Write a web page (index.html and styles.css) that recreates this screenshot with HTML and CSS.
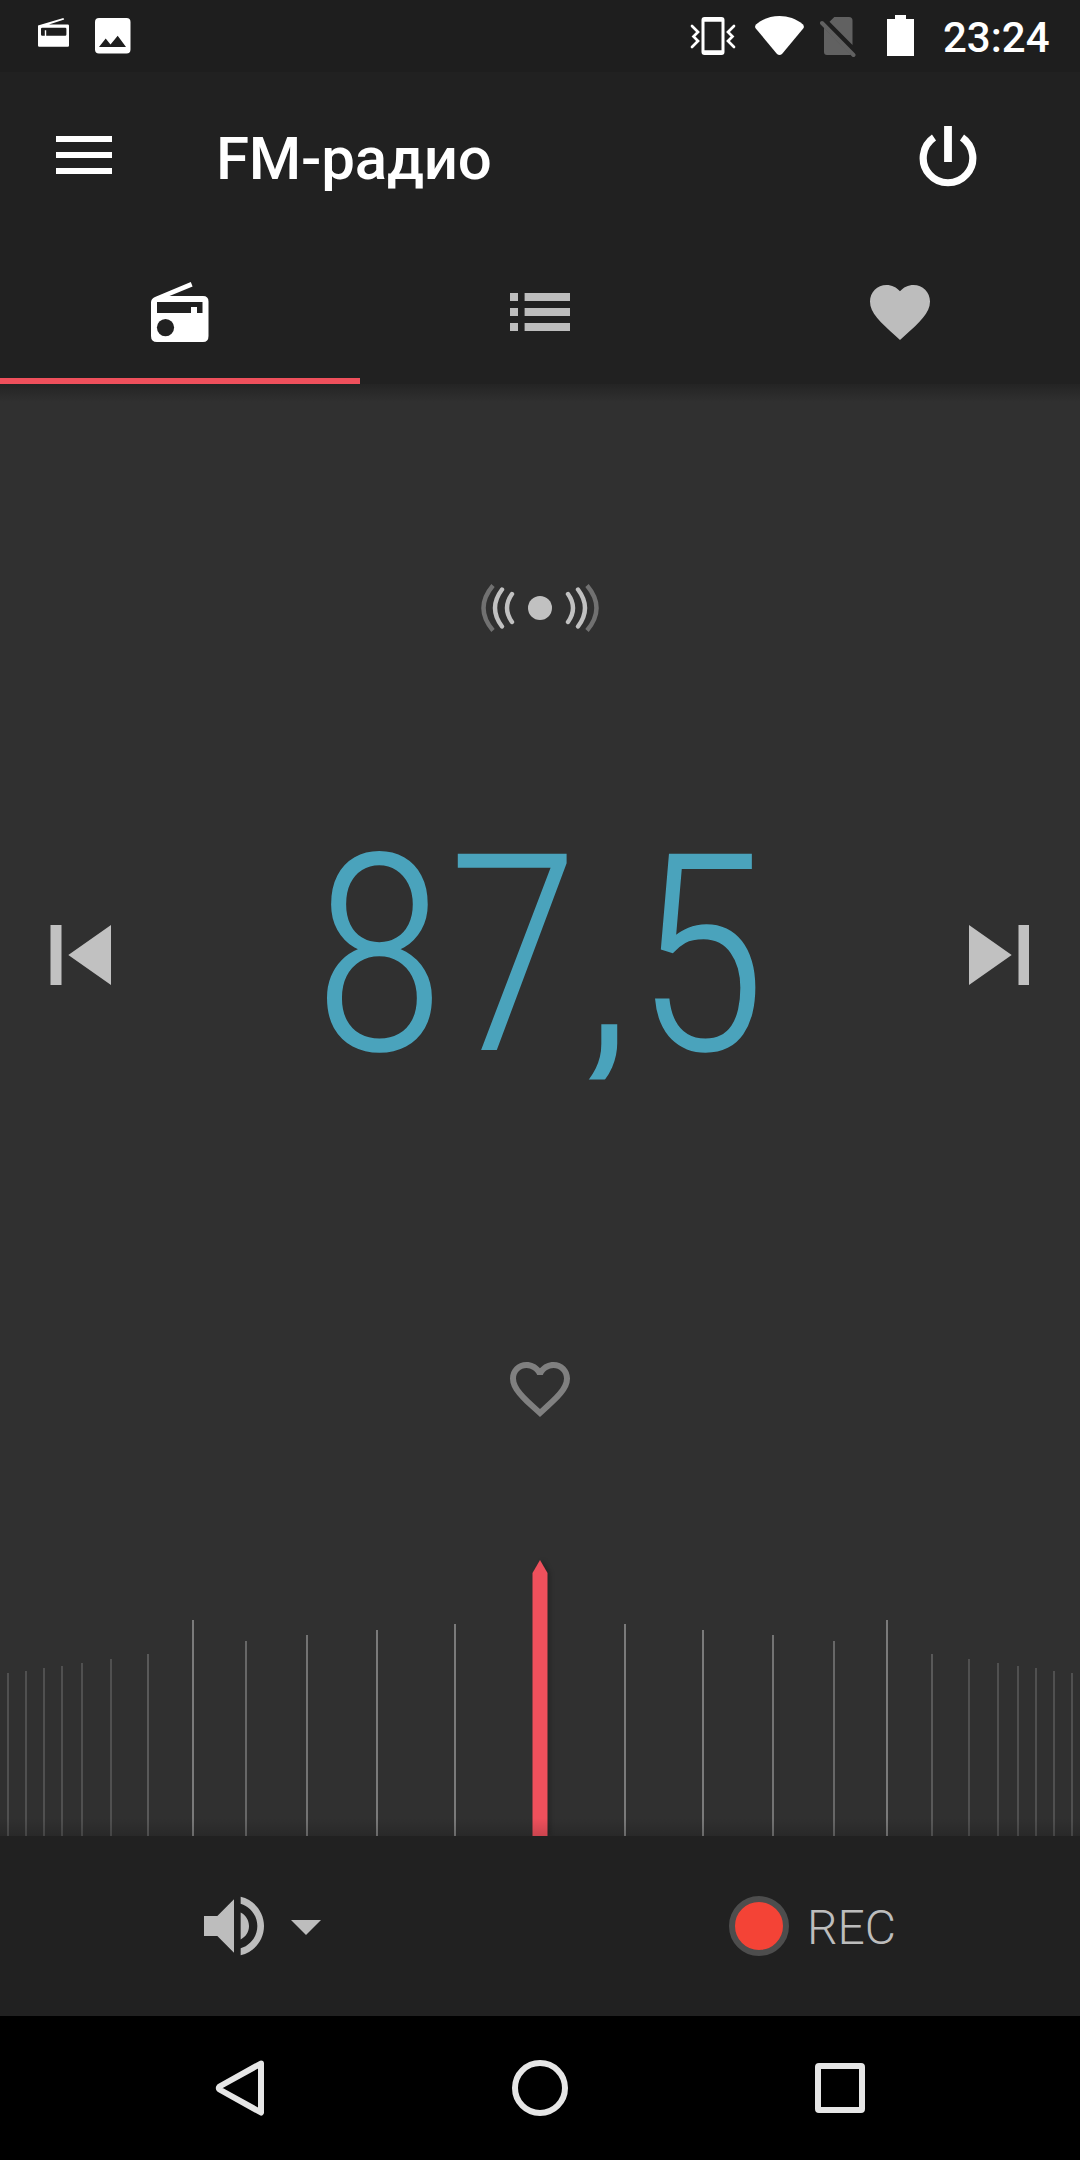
FILE: index.html
```html
<!DOCTYPE html>
<html lang="ru">
<head>
    <meta charset="UTF-8">
    <meta name="viewport" content="width=device-width, initial-scale=1.0">
    <title>FM-радио</title>
    <link rel="stylesheet" href="styles.css">
</head>
<body>
    <div class="status-bar">
        <div class="status-left">
            <svg class="status-radio" width="32" height="30" viewBox="0 0 32 30">
                <path fill-rule="evenodd" d="M0 7.500L25.400 0l.8 1.600L11 6.600h18.800q1.200 0 1.200 1.200v19.700q0 1.200-1.200 1.200H1.200Q0 28.700 0 27.500zM4.200 9.800q-1.200 0-1.200 1.200v5.500q0 1.200 1.200 1.200h2.600v-5.500h1.400v5.500h19q1.200 0 1.200-1.200V11q0-1.200-1.200-1.200z"/>
            </svg>
            <svg width="36" height="36" viewBox="0 0 36 36">
                <path fill-rule="evenodd" d="M4 0h27.500q4 0 4 4v27.500q0 4-4 4H4q-4 0-4-4V4q0-4 4-4zM4 29h27L22.700 17.800l-7.200 8.700-4.800-6z"/>
            </svg>
        </div>
        <div class="status-right">
            <svg class="status-vibrate" width="46" height="40" viewBox="0 0 46 40">
                <path d="M14.500 1h17q3 0 3 3v32q0 3-3 3h-17q-3 0-3-3V4q0-3 3-3zM14.500 5.700v28.600h17V5.700z" fill-rule="evenodd"/>
                <path d="M2 10l6 6-4.500 4.500L8 25l-6 6M44 10l-6 6 4.500 4.500L38 25l6 6" fill="none" stroke="#fff" stroke-width="2.700" stroke-linecap="round"/>
            </svg>
            <svg class="status-wifi" width="49" height="40" viewBox="0 0 49 40">
                <path d="M22 38L.8 12.500Q-.8 10.300 1.300 8.300C14-2.700 35-2.700 47.700 8.300q2.100 2 .5 4.200L27 38q-2.500 2-5 0z"/>
            </svg>
            <svg class="status-sim" width="36" height="41" viewBox="0 0 36 41">
                <path d="M9.500 4.800L14.300 0H29q3.500 0 3.500 3.500v24.500zM4 10.500L31 37.500q-.8.500-2 .5H7q-3 0-3-3z"/>
                <path d="M2 6l31.500 32" stroke="#616161" stroke-width="4" stroke-linecap="round"/>
            </svg>
            <svg class="status-battery" width="27" height="41" viewBox="0 0 27 41">
                <path d="M8 0h11v4h8v37H0V4h8z"/>
            </svg>
            <span class="clock">23:24</span>
        </div>
    </div>

    <header class="header">
        <svg class="menu" width="56" height="38" viewBox="0 0 56 38">
            <path d="M0 0h56v6H0zM0 16h56v6H0zM0 32h56v6H0z"/>
        </svg>
        <h1 class="title">FM-радио</h1>
        <svg class="power" width="58" height="61" viewBox="0 0 58 61">
            <path d="M25.100 0h7.800v36h-7.800z"/>
            <path d="M15 11.500A24.800 24.800 0 1 0 43 11.500" fill="none" stroke="#fff" stroke-width="7.200"/>
        </svg>
    </header>

    <nav class="tabs">
        <a class="tab active">
            <svg width="58" height="60" viewBox="0 0 58 60">
                <path fill-rule="evenodd" d="M4 15L39.800 0l1.800 4.400L18.500 14H52q5.500 0 5.500 5.500V54q0 6-5.500 6H6q-6 0-6-6V20.500q0-4 4-5.500zM6 20v11h34v-6h6v6h5.500V20z"/>
                <circle cx="14.500" cy="45.600" r="8.600" fill="#212121"/>
            </svg>
        </a>
        <a class="tab">
            <svg width="60" height="38" viewBox="0 0 60 38">
                <path d="M0 0h8v8H0zM14.600 0H60v8H14.600zM0 15h8v8H0zM14.600 15H60v8H14.600zM0 30h8v8H0zM14.600 30H60v8H14.600z"/>
            </svg>
        </a>
        <a class="tab">
            <svg width="72" height="72" viewBox="0 0 24 24">
                <path d="M12 21.350l-1.450-1.320C5.400 15.360 2 12.280 2 8.500 2 5.420 4.420 3 7.500 3c1.740 0 3.410.81 4.500 2.090C13.090 3.810 14.760 3 16.500 3 19.580 3 22 5.420 22 8.500c0 3.780-3.400 6.860-8.550 11.540L12 21.350z"/>
            </svg>
        </a>
    </nav>

    <main class="tuner">
        <svg class="signal" width="118" height="52" viewBox="0 0 118 52">
            <circle cx="59" cy="26" r="12" fill="#c1c1c1"/>
            <g fill="none" stroke="#c1c1c1" stroke-width="4.400" stroke-linecap="round">
                <path d="M31 12Q21 26 31 40M21 7.500Q7 26 21 44.500M87 12Q97 26 87 40M97 7.500Q111 26 97 44.500"/>
                <path d="M12 3.500Q-7 26 12 48.500M106 3.500Q125 26 106 48.500" stroke="#717171" stroke-linecap="butt"/>
            </g>
        </svg>

        <div class="station">
            <svg width="61" height="60" viewBox="0 0 61 60">
                <path d="M.5 0h11v60H.5zM61 0v60L18.300 30z"/>
            </svg>
            <div class="frequency">87,5</div>
            <svg width="61" height="60" viewBox="0 0 61 60">
                <path d="M49.500 0h10.500v60H49.500zM0 0l42.700 30L0 60z"/>
            </svg>
        </div>

        <svg class="favorite" width="72" height="72" viewBox="0 0 24 24">
            <path d="M16.500 3c-1.740 0-3.410.81-4.500 2.090C10.910 3.810 9.240 3 7.500 3 4.420 3 2 5.420 2 8.500c0 3.780 3.400 6.860 8.550 11.540L12 21.350l1.450-1.320C18.600 15.360 22 12.280 22 8.500 22 5.420 19.580 3 16.500 3zm-4.400 15.550l-.1.100-.1-.1C7.140 14.240 4 11.390 4 8.500 4 6.500 5.500 5 7.500 5c1.540 0 3.040.99 3.570 2.360h1.870C13.460 5.990 14.960 5 16.500 5c2 0 3.500 1.500 3.500 3.500 0 2.890-3.140 5.740-7.900 10.050z"/>
        </svg>

        <svg class="dial" width="1080" height="280" viewBox="0 0 1080 280">
            <defs>
                <g id="ticks">
                    <path d="M7 117h2v163H7zM25 115h2v165h-2zM43 112h2v168h-2zM61 110h2v170h-2zM81 107h2v173h-2zM110 103h2v177h-2z" fill="#505050"/>
                    <path d="M147 98h2v182h-2z" fill="#595959"/>
                    <path d="M245 85h2v195h-2z" fill="#676767"/>
                    <path d="M306 79h2v201h-2z" fill="#737373"/>
                    <path d="M192 64h2v216h-2zM376 74h2v206h-2zM454 68h2v212h-2z" fill="#7a7a7a"/>
                </g>
            </defs>
            <use href="#ticks"/>
            <use href="#ticks" transform="matrix(-1 0 0 1 1080 0)"/>
            <path class="needle" d="M540 4l7.500 13v263h-15V17z"/>
        </svg>
    </main>

    <footer class="footer">
        <button class="volume">
            <svg width="80" height="80" viewBox="0 0 24 24">
                <path d="M3 9v6h4l5 5V4L7 9H3zm13.500 3c0-1.770-1.020-3.290-2.500-4.030v8.050c1.480-.73 2.500-2.250 2.500-4.020zM14 3.230v2.060c2.890.86 5 3.540 5 6.710s-2.110 5.850-5 6.710v2.060c4.010-.91 7-4.490 7-8.770s-2.990-7.860-7-8.770z"/>
            </svg>
            <svg class="arrow" width="30" height="15" viewBox="0 0 30 15">
                <path d="M0 0h30L15 15z"/>
            </svg>
        </button>
        <button class="record">
            <span class="record-dot"></span>
            <span class="record-label">REC</span>
        </button>
    </footer>

    <div class="nav-bar">
        <svg width="60" height="60" viewBox="0 0 60 60">
            <path d="M51 5.500L9.500 28.500q-1.500 1.500 0 3L51 54.500z"/>
        </svg>
        <svg width="60" height="60" viewBox="0 0 60 60">
            <circle cx="30" cy="30" r="25"/>
        </svg>
        <svg width="60" height="60" viewBox="0 0 60 60">
            <rect x="8" y="8" width="44" height="44" rx="1"/>
        </svg>
    </div>
</body>
</html>
```

FILE: styles.css
```css
* {
    margin: 0;
    padding: 0;
    box-sizing: border-box;
    font-family: Roboto, "Noto Sans", sans-serif;
}

body {
    height: 2160px;
    background: #303030;
    color: white;
    display: flex;
    flex-direction: column;
    overflow: hidden;
}

svg {
    display: block;
    flex: none;
    fill: currentColor;
}

.status-bar {
    height: 72px;
    padding: 0 29px 0 38px;
    display: flex;
    justify-content: space-between;
    background: #1e1e1e;
}

.status-left {
    display: flex;
    padding-top: 18px;
    gap: 25px;
}

.status-right {
    display: flex;
    align-items: flex-start;
    padding-top: 15px;
}

.status-vibrate {
    margin: 1px 19px 0 0;
}

.status-wifi {
    margin: 1px 16px 0 0;
}

.status-sim {
    margin: 2px 31px 0 0;
    color: #616161;
}

.clock {
    margin: -2px 0 0 29px;
    width: 108px;
    font-size: 42px;
    font-weight: 500;
    line-height: 50px;
    white-space: nowrap;
}

.header {
    height: 168px;
    padding: 0 103px 0 56px;
    display: flex;
    align-items: center;
    background: #212121;
}

.menu {
    margin-bottom: 2px;
}

.title {
    margin-left: 104px;
    padding-top: 5px;
    font-size: 60px;
    font-weight: 500;
    line-height: 70px;
    letter-spacing: -0.2px;
}

.power {
    margin-left: auto;
}

.tabs {
    height: 144px;
    display: flex;
    background: #212121;
}

.tab {
    flex: 1;
    display: flex;
    align-items: center;
    justify-content: center;
    border-bottom: 6px solid transparent;
    padding-top: 6px;
    color: #bdbdbd;
}

.tab.active {
    color: white;
    border-bottom-color: #ef505c;
}

.tuner {
    flex: 1;
    display: flex;
    flex-direction: column;
    align-items: center;
    background:
        linear-gradient(to bottom, #242424, #303030) top / 100% 18px no-repeat,
        #303030;
    position: relative;
}

.signal {
    margin-top: 198px;
}

.station {
    width: 100%;
    margin-top: 121px;
    height: 400px;
    padding: 0 50px;
    display: flex;
    align-items: center;
    justify-content: space-between;
    color: #c1c1c1;
}

/* the comma's tail is cut off at the bottom of the box */
.frequency {
    padding-top: 1px;
    font-family: "Roboto Condensed", Roboto, sans-serif;
    font-size: 276px;
    font-weight: 300;
    font-stretch: 75%;
    line-height: 324px;
    color: #4aa3bc;
    clip-path: inset(0 0 38px);
}

.favorite {
    margin-top: 198px;
    color: #808080;
}

.dial {
    margin-top: auto;
}

.needle {
    fill: #ef505c;
    filter: drop-shadow(3px 0 2px rgba(0, 0, 0, 0.2));
}

/* shadow the footer casts on the dial */
.tuner::after {
    content: "";
    position: absolute;
    left: 0;
    right: 0;
    bottom: 0;
    height: 18px;
    background: linear-gradient(to bottom, transparent, rgba(0, 0, 0, 0.15));
}

.footer {
    height: 180px;
    display: flex;
    background: #212121;
}

.footer button {
    display: flex;
    align-items: center;
    border: none;
    background: none;
    color: #bdbdbd;
}

.volume {
    width: 540px;
    padding-left: 194px;
}

.arrow {
    margin: 3px 0 0 17px;
}

.record {
    padding-left: 189px;
}

.record-dot {
    width: 60px;
    height: 60px;
    margin-right: 18px;
    border: 6px solid #4d4d4d;
    border-radius: 50%;
    background: #f44336;
}

.record-label {
    padding-top: 2px;
    font-size: 48px;
    font-weight: 300;
}

.nav-bar {
    height: 144px;
    padding: 0 210px;
    display: flex;
    align-items: center;
    justify-content: space-between;
    background: #000;
}

.nav-bar svg {
    fill: none;
    stroke: #e6e6e6;
    stroke-width: 6;
    stroke-linejoin: round;
}
```
